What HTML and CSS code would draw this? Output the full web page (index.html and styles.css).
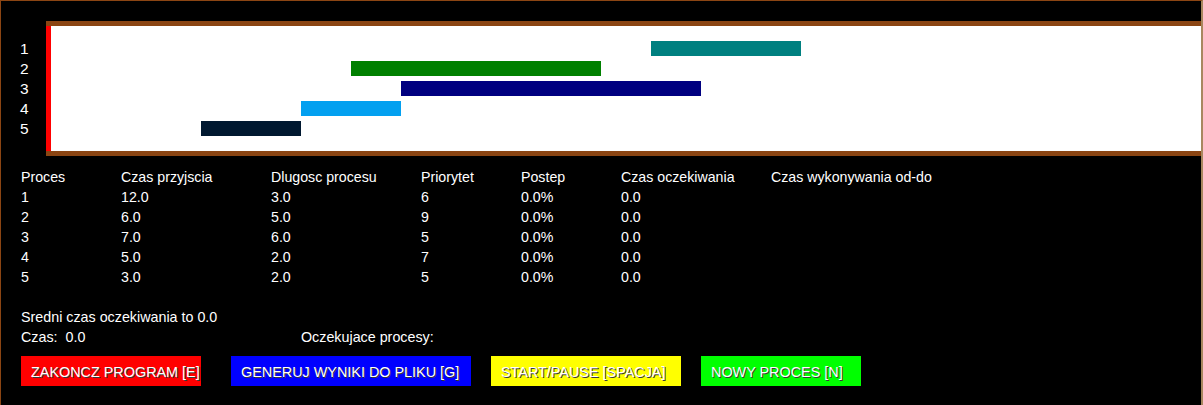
FILE: index.html
```html
<!DOCTYPE html>
<html lang="pl">
<head>
<meta charset="utf-8">
<title>Symulacja procesów</title>
<link rel="stylesheet" href="styles.css">
</head>
<body>
<div class="window">
  <div class="chart-row">
    <div class="labels">
      <div class="label">1</div>
      <div class="label">2</div>
      <div class="label">3</div>
      <div class="label">4</div>
      <div class="label">5</div>
    </div>
    <div class="panel">
      <div class="panel-inner">
        <div class="lane"><div class="bar teal" style="margin-left:600px;width:150px"></div></div>
        <div class="lane"><div class="bar green" style="margin-left:300px;width:250px"></div></div>
        <div class="lane"><div class="bar navy" style="margin-left:350px;width:300px"></div></div>
        <div class="lane"><div class="bar sky" style="margin-left:250px;width:100px"></div></div>
        <div class="lane"><div class="bar dark" style="margin-left:150px;width:100px"></div></div>
      </div>
    </div>
  </div>

  <div class="table">
    <div class="cell">Proces</div><div class="cell">Czas przyjscia</div><div class="cell">Dlugosc procesu</div><div class="cell">Priorytet</div><div class="cell">Postep</div><div class="cell">Czas oczekiwania</div><div class="cell">Czas wykonywania od-do</div>
    <div class="cell">1</div><div class="cell">12.0</div><div class="cell">3.0</div><div class="cell">6</div><div class="cell">0.0%</div><div class="cell">0.0</div><div class="cell"></div>
    <div class="cell">2</div><div class="cell">6.0</div><div class="cell">5.0</div><div class="cell">9</div><div class="cell">0.0%</div><div class="cell">0.0</div><div class="cell"></div>
    <div class="cell">3</div><div class="cell">7.0</div><div class="cell">6.0</div><div class="cell">5</div><div class="cell">0.0%</div><div class="cell">0.0</div><div class="cell"></div>
    <div class="cell">4</div><div class="cell">5.0</div><div class="cell">2.0</div><div class="cell">7</div><div class="cell">0.0%</div><div class="cell">0.0</div><div class="cell"></div>
    <div class="cell">5</div><div class="cell">3.0</div><div class="cell">2.0</div><div class="cell">5</div><div class="cell">0.0%</div><div class="cell">0.0</div><div class="cell"></div>
  </div>

  <div class="summary">Sredni czas oczekiwania to 0.0</div>
  <div class="status">
    <div class="time">Czas:  0.0</div>
    <div class="queue">Oczekujace procesy:</div>
  </div>

  <div class="buttons">
    <div class="btn btn-red">ZAKONCZ PROGRAM [E]</div>
    <div class="btn btn-blue">GENERUJ WYNIKI DO PLIKU [G]</div>
    <div class="btn btn-yellow">START/PAUSE [SPACJA]</div>
    <div class="btn btn-green">NOWY PROCES [N]</div>
  </div>
</div>
</body>
</html>
```

FILE: styles.css
```css
html, body {
  margin: 0;
  padding: 0;
  background: #000;
}

body {
  font-family: "Liberation Sans", Arial, sans-serif;
  color: #fff;
  overflow: hidden;
}

.window {
  box-sizing: border-box;
  width: 1203px;
  height: 405px;
  border-top: 1px solid #8b4513;
  border-left: 1px solid #8b4513;
  border-right: 2px solid #a8875f;
  padding-top: 20px;
}

.chart-row {
  display: flex;
}

.labels {
  width: 45px;
  box-sizing: border-box;
  padding-top: 18px;
  padding-left: 19px;
  font-size: 15.5px;
}

.label {
  height: 20px;
  line-height: 20px;
}

.panel {
  flex: 1;
  border-top: 5px solid #8b4513;
  border-bottom: 5px solid #8b4513;
}

.panel-inner {
  height: 125px;
  box-sizing: border-box;
  border-left: 5px solid #ff0000;
  background: #fff;
  padding-top: 10px;
}

.lane {
  height: 20px;
  display: flex;
  align-items: flex-start;
}

.bar {
  height: 15px;
  margin-top: 5px;
}

.teal { background: #008080; }
.green { background: #008000; }
.navy { background: #000080; }
.sky { background: #03a0f0; }
.dark { background: #001830; }

.table {
  display: grid;
  grid-template-columns: 100px 150px 150px 100px 100px 150px 200px;
  margin-top: 11px;
  margin-left: 20px;
  font-size: 14.2px;
}

.cell {
  height: 20px;
  line-height: 20px;
  white-space: nowrap;
}

.summary {
  margin-top: 20px;
  margin-left: 20px;
  font-size: 14.3px;
  line-height: 20px;
  height: 20px;
}

.status {
  display: flex;
  margin-left: 20px;
  font-size: 14.3px;
  line-height: 20px;
  height: 20px;
}

.time {
  width: 280px;
  white-space: pre;
}

.buttons {
  display: flex;
  gap: 20px;
  margin-top: 9px;
  margin-left: 20px;
}

.btn {
  box-sizing: border-box;
  height: 30px;
  padding-top: 3px;
  padding-left: 10px;
  line-height: 27px;
  font-size: 14.4px;
  color: #fff;
  white-space: nowrap;
  text-shadow: 1px 1px 0 #3a3a3a;
}

.btn-red { width: 180px; margin-right: 10px; background: #ff0000; }
.btn-blue { width: 240px; background: #0000ff; }
.btn-yellow { width: 190px; background: #ffff00; }
.btn-green { width: 160px; background: #00ff00; }
```
